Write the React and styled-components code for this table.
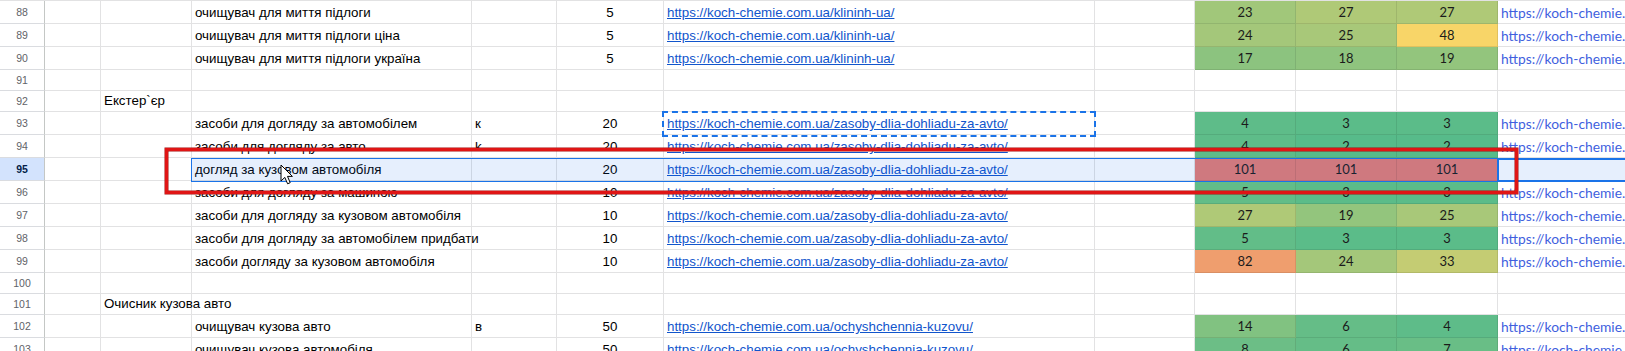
import React from "react";
import styled, { createGlobalStyle } from "styled-components";

const KLIN = "https://koch-chemie.com.ua/klininh-ua/";
const AVTO = "https://koch-chemie.com.ua/zasoby-dlia-dohliadu-za-avto/";
const KUZ = "https://koch-chemie.com.ua/ochyshchennia-kuzovu/";

// column widths, right gridline included
const W = { a: 56, b: 91, c: 280, d: 85, e: 107, f: 431, g: 100, h: 101, k: 300 };

const rows = [
  { n: 88, c: "очищувач для миття підлоги", e: 5, url: KLIN, heat: [23, 27, 27] },
  { n: 89, c: "очищувач для миття підлоги ціна", e: 5, url: KLIN, heat: [24, 25, 48] },
  { n: 90, c: "очищувач для миття підлоги україна", e: 5, url: KLIN, heat: [17, 18, 19] },
  { n: 91, short: true },
  { n: 92, short: true, b: "Екстер`єр" },
  { n: 93, c: "засоби для догляду за автомобілем", d: "к", e: 20, url: AVTO, heat: [4, 3, 3] },
  { n: 94, c: "засоби для догляду за авто", d: "k", e: 20, url: AVTO, heat: [4, 2, 2] },
  { n: 95, c: "догляд за кузовом автомобіля", e: 20, url: AVTO, heat: [101, 101, 101], active: true },
  { n: 96, c: "засоби для догляду за машиною", e: 10, url: AVTO, heat: [5, 3, 3] },
  { n: 97, c: "засоби для догляду за кузовом автомобіля", e: 10, url: AVTO, heat: [27, 19, 25] },
  { n: 98, c: "засоби для догляду за автомобілем придбати", e: 10, url: AVTO, heat: [5, 3, 3] },
  { n: 99, c: "засоби догляду за кузовом автомобіля", e: 10, url: AVTO, heat: [82, 24, 33] },
  { n: 100, short: true },
  { n: 101, short: true, b: "Очисник кузова авто" },
  { n: 102, c: "очищувач кузова авто", d: "в", e: 50, url: KUZ, heat: [14, 6, 4] },
  { n: 103, c: "очищувач кузова автомобіля", e: 50, url: KUZ, heat: [8, 6, 7] },
];

// green -> yellow -> red colour scale, like the sheet's conditional format
const LOW = [87, 187, 138];
const MID = [255, 214, 102];
const HIGH = [230, 124, 115];
const mix = (a, b, t) => a.map((v, i) => Math.round(v + (b[i] - v) * t));
const heatColor = (v) => {
  const c = v <= 50 ? mix(LOW, MID, (v - 2) / 48) : mix(MID, HIGH, (v - 50) / 51);
  return `rgb(${c.join(",")})`;
};

const GlobalStyle = createGlobalStyle`
  html, body {
    margin: 0;
    padding: 0;
    background: #fff;
    overflow: hidden;
  }
  body {
    font-family: "Liberation Sans", Arial, sans-serif;
  }
`;

const Sheet = styled.div`
  position: relative;
  width: 1798px;
  border-top: 1px solid #e2e2e3;
`;

const Row = styled.div`
  display: flex;
  height: ${(p) => (p.$short ? 21 : 23)}px;
`;

const RowHead = styled.div`
  flex: 0 0 45px;
  box-sizing: border-box;
  border-right: 1px solid #c4c7c5;
  border-bottom: 1px solid #dadce0;
  background: ${(p) => (p.$active ? "#d3e3fd" : "#fff")};
  color: ${(p) => (p.$active ? "#041e49" : "#5f6368")};
  font-weight: ${(p) => (p.$active ? 700 : 400)};
  font-size: 10.5px;
  display: flex;
  align-items: center;
  justify-content: center;
`;

const Cell = styled.div`
  flex: 0 0 ${(p) => p.$w}px;
  width: ${(p) => p.$w}px;
  min-width: 0;
  box-sizing: border-box;
  border-right: 1px solid #e2e2e3;
  border-bottom: 1px solid #e2e2e3;
  display: flex;
  align-items: flex-end;
  justify-content: ${(p) => (p.$center ? "center" : "flex-start")};
  padding: 0 3px 3px;
  font-size: 13.33px;
  line-height: 15px;
  color: #000;
  white-space: nowrap;
`;

const CellText = styled.span`
  flex: none;
`;

const Link = styled.span`
  flex: none;
  color: #1155cc;
  text-decoration: underline;
`;

const HeatCell = styled(Cell)`
  font-family: Lato, "Open Sans", sans-serif;
  font-size: 13px;
  align-items: center;
  justify-content: center;
  padding: 0;
  color: #1b1b1b;
  background: ${(p) => p.$bg || "transparent"};
  border-color: ${(p) => (p.$bg ? "rgba(0, 0, 0, 0.09)" : "#e2e2e3")};
`;

const SideCell = styled(Cell)`
  font-family: Lato, "Open Sans", sans-serif;
  font-size: 13.8px;
  align-items: center;
  padding: 0 3px;
  color: #3f5fde;
  overflow: hidden;
`;

const SelectionBand = styled.div`
  position: absolute;
  left: 191px;
  right: 0;
  top: 157px;
  height: 24px;
  box-sizing: border-box;
  border: 1px solid #1a73e8;
  background: rgba(14, 101, 235, 0.1);
  pointer-events: none;
`;

const ActiveCell = styled.div`
  position: absolute;
  left: 1497px;
  right: -4px;
  top: 157px;
  height: 24px;
  box-sizing: border-box;
  border: 2px solid #1a73e8;
`;

const CopyMarquee = styled.div`
  position: absolute;
  left: 662px;
  top: 110px;
  width: 434px;
  height: 26px;
  box-sizing: border-box;
  border: 2px dashed #1a73e8;
`;

const RedFrame = styled.div`
  position: absolute;
  left: 165px;
  top: 147px;
  width: 1353px;
  height: 46px;
  box-sizing: border-box;
  border: 3px solid #e01515;
  box-shadow: 0 0 0 0.5px #a31111, inset 0 0 0 0.5px #a31111;
`;

const Pointer = styled.svg`
  position: absolute;
  left: 280px;
  top: 163px;
`;

const SheetRow = ({ r }) => (
  <Row $short={r.short}>
    <RowHead $active={r.active}>{r.n}</RowHead>
    <Cell $w={W.a} />
    <Cell $w={W.b}>{r.b && <CellText>{r.b}</CellText>}</Cell>
    <Cell $w={W.c}>{r.c && <CellText>{r.c}</CellText>}</Cell>
    <Cell $w={W.d}>{r.d && <CellText>{r.d}</CellText>}</Cell>
    <Cell $w={W.e} $center>
      {r.e && <CellText>{r.e}</CellText>}
    </Cell>
    <Cell $w={W.f}>{r.url && <Link>{r.url}</Link>}</Cell>
    <Cell $w={W.g} />
    {[0, 1, 2].map((i) => (
      <HeatCell key={i} $w={W.h} $bg={r.heat && heatColor(r.heat[i])}>
        {r.heat && r.heat[i]}
      </HeatCell>
    ))}
    <SideCell $w={W.k}>{r.url && !r.active ? <CellText>{r.url}</CellText> : ""}</SideCell>
  </Row>
);

const App = () => {
  return (
    <>
      <GlobalStyle />
      <Sheet>
        {rows.map((r) => (
          <SheetRow key={r.n} r={r} />
        ))}
        <SelectionBand />
        <ActiveCell />
        <CopyMarquee />
        <RedFrame />
        <Pointer width="14" height="22" viewBox="0 0 14 22">
          <path
            d="M1 1 L1 17 L4.8 13.4 L7.6 19.8 L10.2 18.7 L7.5 12.4 L12.4 12.4 Z"
            fill="#fff"
            stroke="#000"
            strokeWidth="1"
            strokeLinejoin="miter"
          />
        </Pointer>
      </Sheet>
    </>
  );
};

export default App;
